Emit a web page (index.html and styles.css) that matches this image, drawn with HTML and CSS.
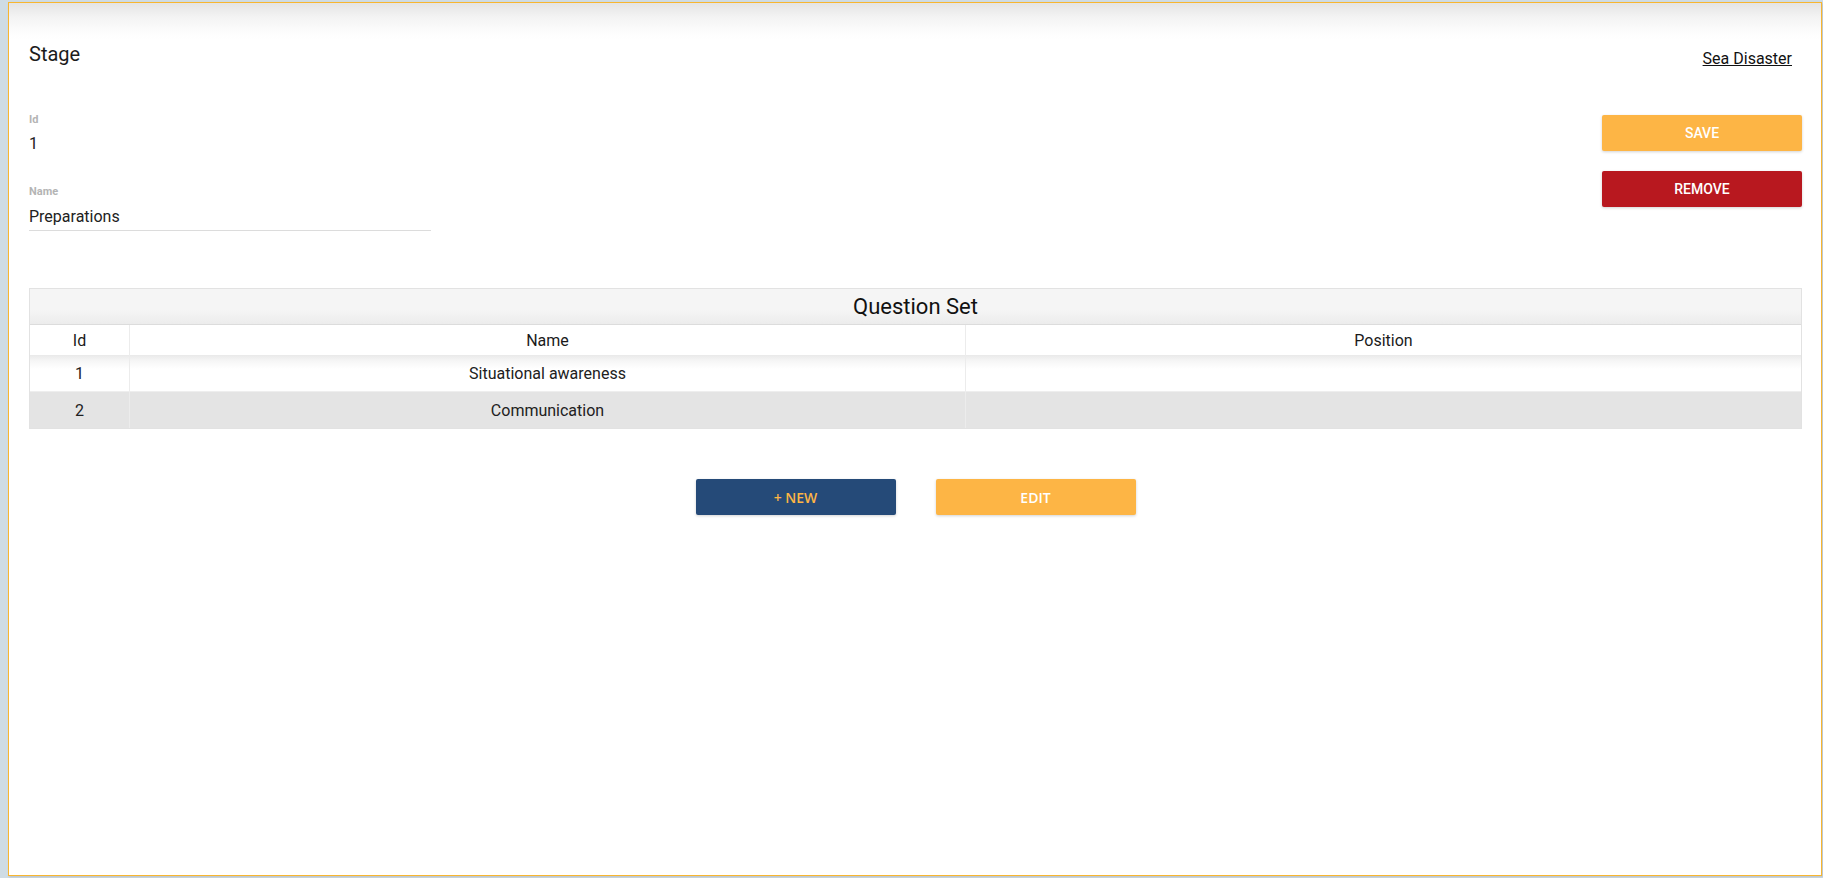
FILE: index.html
```html
<!DOCTYPE html>
<html lang="en">
<head>
<meta charset="utf-8">
<title>Stage</title>
<link rel="stylesheet" href="styles.css">
</head>
<body>
<div class="panel">
  <header class="page-head">
    <h1 class="page-title">Stage</h1>
    <a class="crumb" href="#">Sea Disaster</a>
  </header>

  <section class="details">
    <div class="fields">
      <div class="field">
        <div class="field-label">Id</div>
        <div class="field-value">1</div>
      </div>
      <div class="field field-name">
        <div class="field-label">Name</div>
        <div class="field-value field-input">Preparations</div>
      </div>
    </div>
    <div class="actions">
      <button class="btn btn-save">SAVE</button>
      <button class="btn btn-remove">REMOVE</button>
    </div>
  </section>

  <table class="grid">
    <colgroup>
      <col class="col-id">
      <col>
      <col>
    </colgroup>
    <thead>
      <tr class="title-row"><th colspan="3">Question Set</th></tr>
      <tr class="head-row"><th>Id</th><th class="sep">Name</th><th class="sep">Position</th></tr>
    </thead>
    <tbody>
      <tr class="row-first"><td>1</td><td class="sep">Situational awareness</td><td class="sep"></td></tr>
      <tr class="row-alt"><td>2</td><td class="sep">Communication</td><td class="sep"></td></tr>
    </tbody>
  </table>

  <div class="bottom-actions">
    <button class="btn btn-new">+ NEW</button>
    <button class="btn btn-edit">EDIT</button>
  </div>
</div>
</body>
</html>
```

FILE: styles.css
```css
* { box-sizing: border-box; }

html, body {
  margin: 0;
  height: 100%;
}

body {
  background: #cfdce4;
  padding: 2px 1px 2px 8px;
  font-family: Roboto, "Liberation Sans", Arial, sans-serif;
  color: #212121;
}

.panel {
  height: 874px;
  border: 1px solid #f8b630;
  background: linear-gradient(#e4e4e4 0, #f3f3f3 14px, #fcfcfc 28px, #ffffff 36px) no-repeat;
  background-color: #fff;
  padding: 0 19px 0 20px;
  box-shadow: 1px 1px 2px rgba(0,0,0,0.12);
}

.page-head {
  display: flex;
  justify-content: space-between;
  align-items: flex-start;
  padding-top: 39px;
}

.page-title {
  margin: 0;
  font-size: 20px;
  line-height: 24px;
  font-weight: 400;
  color: #1c1c1c;
}

.crumb {
  margin-top: 7px;
  margin-right: 10px;
  font-size: 16px;
  line-height: 20px;
  color: #111;
  text-decoration: underline;
}

.details {
  display: flex;
  justify-content: space-between;
  align-items: flex-start;
  margin-top: 44px;
}

.fields {
  display: flex;
  flex-direction: column;
}

.field-name {
  margin-top: 31px;
}

.field-label {
  font-size: 11px;
  line-height: 14px;
  font-weight: 700;
  color: #b4b4b4;
}

.field-value {
  margin-top: 7px;
  font-size: 16px;
  line-height: 20px;
  color: #212121;
}

.field-input {
  width: 402px;
  margin-top: 8px;
  padding-bottom: 3px;
  border-bottom: 1px solid #dcdcdc;
}

.actions {
  display: flex;
  flex-direction: column;
  gap: 20px;
  margin-top: 2px;
}

.btn {
  width: 200px;
  height: 36px;
  border: 0;
  border-radius: 2px;
  font-family: Roboto, "Liberation Sans", Arial, sans-serif;
  font-size: 14px;
  font-weight: 500;
  color: #fff;
  box-shadow: 0 1px 3px rgba(0,0,0,0.18);
  cursor: pointer;
  padding: 0;
}

.btn-save { background: #fdb545; }
.btn-remove { background: #b8181f; }

.grid {
  margin-top: 57px;
  width: 100%;
  table-layout: fixed;
  border-collapse: separate;
  border-spacing: 0;
  border: 1px solid #e2e2e2;
  font-size: 16px;
  text-align: center;
}

.col-id { width: 99px; }

.grid th,
.grid td {
  padding: 0;
  font-weight: 400;
  vertical-align: middle;
}

.sep { border-left: 1px solid #ececec; }

.title-row th {
  height: 36px;
  font-size: 22px;
  color: #111;
  background: linear-gradient(#f5f5f5 0, #f5f5f5 60%, #ececec 100%);
  border-bottom: 1px solid #dcdcdc;
}

.head-row th {
  height: 30px;
  background: #fff;
  color: #1a1a1a;
}

.row-first td {
  height: 37px;
  background: linear-gradient(#e9e9e9 0, #f6f6f6 6px, #ffffff 14px);
  border-bottom: 1px solid #eeeeee;
}

.row-alt td {
  height: 36px;
  background: #e4e4e4;
}

.bottom-actions {
  display: flex;
  justify-content: center;
  gap: 40px;
  margin-top: 50px;
}

.btn-new,
.btn-edit {
  font-family: "Open Sans", Roboto, sans-serif;
  font-size: 14px;
  font-weight: 600;
}

.btn-new { background: #254a78; color: #fdb545; }
.btn-edit { background: #fdb545; color: #fff; }
```
